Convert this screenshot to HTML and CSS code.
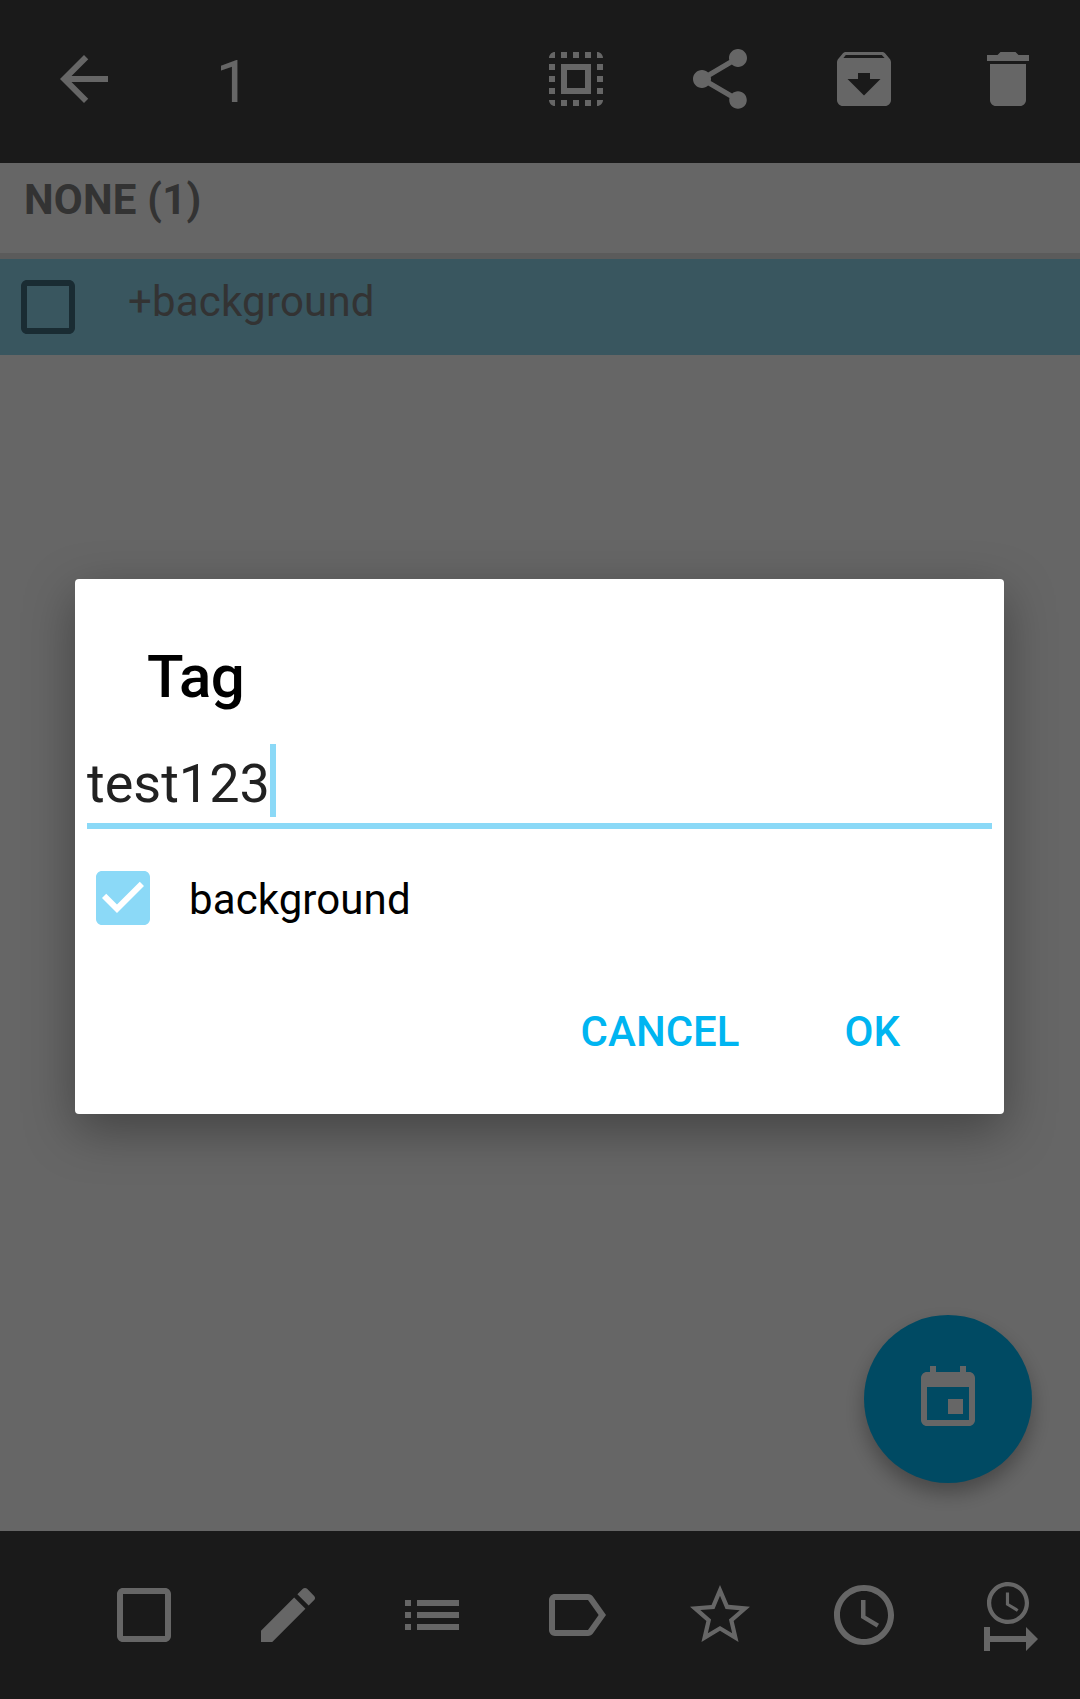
FILE: index.html
```html
<!DOCTYPE html>
<html lang="en">
<head>
  <meta charset="UTF-8">
  <title>Tag dialog</title>
  <link rel="stylesheet" href="styles.css">
</head>
<body>
<div class="app">
  <header class="topbar">
    <svg class="icon back" viewBox="0 0 24 24"><path d="M20 11H7.83l5.59-5.59L12 4l-8 8 8 8 1.41-1.41L7.83 13H20v-2z"/></svg>
    <span class="count">1</span>
    <div class="actions">
      <svg class="icon" viewBox="0 0 24 24"><path d="M3 5h2V3c-1.1 0-2 .9-2 2zm0 8h2v-2H3v2zm4 8h2v-2H7v2zM3 9h2V7H3v2zm10-6h-2v2h2V3zm6 0v2h2c0-1.1-.9-2-2-2zM5 21v-2H3c0 1.1.9 2 2 2zm-2-4h2v-2H3v2zM9 3H7v2h2V3zm2 18h2v-2h-2v2zm8-8h2v-2h-2v2zm0 8c1.1 0 2-.9 2-2h-2v2zm0-12h2V7h-2v2zm0 8h2v-2h-2v2zm-4 4h2v-2h-2v2zm0-16h2V3h-2v2zM7 17h10V7H7v10zm2-8h6v6H9V9z"/></svg>
      <svg class="icon" viewBox="0 0 24 24"><path d="M18 16.08c-.76 0-1.44.3-1.96.77L8.91 12.7c.05-.23.09-.46.09-.7s-.04-.47-.09-.7l7.05-4.11c.54.5 1.25.81 2.04.81 1.66 0 3-1.34 3-3s-1.34-3-3-3-3 1.34-3 3c0 .24.04.47.09.7L8.04 9.81C7.5 9.31 6.79 9 6 9c-1.66 0-3 1.34-3 3s1.34 3 3 3c.79 0 1.5-.31 2.04-.81l7.12 4.16c-.05.21-.08.43-.08.65 0 1.61 1.31 2.92 2.92 2.92s2.92-1.31 2.92-2.92-1.31-2.92-2.92-2.92z"/></svg>
      <svg class="icon" viewBox="0 0 24 24"><path d="M20.54 5.23l-1.39-1.68C18.88 3.21 18.47 3 18 3H6c-.47 0-.88.21-1.16.55L3.46 5.23C3.17 5.57 3 6.02 3 6.5V19c0 1.1.9 2 2 2h14c1.1 0 2-.9 2-2V6.5c0-.48-.17-.93-.46-1.27zM12 17.5L6.5 12H10v-2h4v2h3.5L12 17.5zM5.12 5l.81-1h12l.94 1H5.12z"/></svg>
      <svg class="icon" viewBox="0 0 24 24"><path d="M6 19c0 1.1.9 2 2 2h8c1.1 0 2-.9 2-2V7H6v12zM19 4h-3.5l-1-1h-5l-1 1H5v2h14V4z"/></svg>
    </div>
  </header>

  <main class="list">
    <div class="group-title">NONE (1)</div>
    <div class="task">
      <svg class="icon task-check" viewBox="0 0 24 24"><path d="M19 5v14H5V5h14m0-2H5c-1.1 0-2 .9-2 2v14c0 1.1.9 2 2 2h14c1.1 0 2-.9 2-2V5c0-1.1-.9-2-2-2z"/></svg>
      <span class="task-text">+background</span>
    </div>
    <button class="fab">
      <svg class="icon" viewBox="0 0 24 24"><path d="M17 12h-5v5h5v-5zM16 1v2H8V1H6v2H5c-1.11 0-1.99.9-1.99 2L3 19c0 1.1.89 2 2 2h14c1.1 0 2-.9 2-2V5c0-1.1-.9-2-2-2h-1V1h-2zm3 18H5V8h14v11z"/></svg>
    </button>
  </main>

  <footer class="bottombar">
    <svg class="icon" viewBox="0 0 24 24"><path d="M19 5v14H5V5h14m0-2H5c-1.1 0-2 .9-2 2v14c0 1.1.9 2 2 2h14c1.1 0 2-.9 2-2V5c0-1.1-.9-2-2-2z"/></svg>
    <svg class="icon" viewBox="0 0 24 24"><path d="M3 17.25V21h3.75L17.81 9.94l-3.75-3.75L3 17.25zM20.71 7.04c.39-.39.39-1.02 0-1.41l-2.34-2.34c-.39-.39-1.02-.39-1.41 0l-1.83 1.83 3.75 3.75 1.83-1.83z"/></svg>
    <svg class="icon" viewBox="0 0 24 24"><path d="M3 13h2v-2H3v2zm0 4h2v-2H3v2zm0-8h2V7H3v2zm4 4h14v-2H7v2zm0 4h14v-2H7v2zM7 7v2h14V7H7z"/></svg>
    <svg class="icon" viewBox="0 0 24 24"><path d="M17.63 5.84C17.27 5.33 16.67 5 16 5L5 5.01C3.9 5.01 3 5.9 3 7v10c0 1.1.9 1.99 2 1.99L16 19c.67 0 1.27-.33 1.63-.84L22 12l-4.37-6.16zM16 17H5V7h11l3.55 5L16 17z"/></svg>
    <svg class="icon" viewBox="0 0 24 24"><path fill-rule="evenodd" d="M22 9.24l-7.19-.62L12 2 9.19 8.63 2 9.24l5.46 4.73L5.82 21 12 17.27 18.18 21l-1.63-7.03L22 9.24zM12 15.65L7.94 18.1l1.08-4.62-3.59-3.11 4.73-.41L12 5.62l1.85 4.35 4.73.41-3.59 3.1 1.08 4.62L12 15.65z"/></svg>
    <svg class="icon" viewBox="0 0 24 24"><path d="M11.99 2C6.47 2 2 6.48 2 12s4.47 10 9.99 10C17.52 22 22 17.52 22 12S17.52 2 11.99 2zM12 20c-4.42 0-8-3.58-8-8s3.58-8 8-8 8 3.58 8 8-3.58 8-8 8zm.5-13H11v6l5.25 3.15.75-1.23-4.5-2.67z"/></svg>
    <svg class="icon" viewBox="0 0 24 24">
      <path transform="translate(12 8) scale(.7) translate(-12 -12)" d="M11.99 2C6.47 2 2 6.48 2 12s4.47 10 9.99 10C17.52 22 22 17.52 22 12S17.52 2 11.99 2zM12 20c-4.42 0-8-3.58-8-8s3.58-8 8-8 8 3.58 8 8-3.58 8-8 8zm.5-13H11v6l5.25 3.15.75-1.23-4.5-2.67z"/>
      <path d="M4 16h2v3h12v-3l4 4-4 4v-3H6v3H4z"/>
    </svg>
  </footer>
</div>

<div class="overlay">
  <div class="dialog">
    <h2 class="dialog-title">Tag</h2>
    <div class="field">
      <span class="field-text">test123</span>
      <span class="cursor"></span>
    </div>
    <div class="tag-row">
      <svg class="tag-check" viewBox="3 3 18 18"><path d="M19 3H5c-1.11 0-2 .9-2 2v14c0 1.1.89 2 2 2h14c1.11 0 2-.9 2-2V5c0-1.11-.89-2-2-2zm-9 14l-5-5 1.41-1.41L10 14.17l7.59-7.59L19 8l-9 9z"/></svg>
      <span class="tag-name">background</span>
    </div>
    <div class="dialog-actions">
      <span>CANCEL</span>
      <span>OK</span>
    </div>
  </div>
</div>
</body>
</html>
```

FILE: styles.css
```css
html, body {
  margin: 0;
  padding: 0;
  height: 100%;
}
body {
  position: relative;
  overflow: hidden;
  background-color: #fff;
  font-family: Roboto, "Liberation Sans", sans-serif;
}
.app {
  display: flex;
  flex-direction: column;
  height: 1699px;
}
.icon {
  display: block;
  flex: none;
  width: 72px;
  height: 72px;
  fill: #fff;
}

.topbar {
  display: flex;
  flex: none;
  align-items: flex-start;
  box-sizing: border-box;
  height: 163px;
  padding: 43px 36px 0 48px;
  background-color: #424242;
  color: #fff;
}
.count {
  margin-left: 96px;
  font-size: 60px;
  line-height: 77px;
}
.actions {
  display: flex;
  gap: 72px;
  margin-left: auto;
}

.list {
  position: relative;
  flex: 1;
}
.group-title {
  box-sizing: border-box;
  height: 96px;
  padding-left: 24px;
  border-bottom: 6px solid #e4e4e4;
  color: #808080;
  font-size: 42px;
  font-weight: 700;
  line-height: 73px;
  letter-spacing: 0.2px;
}
.task {
  display: flex;
  align-items: flex-start;
  height: 96px;
  padding-left: 12px;
  background-color: #8ed6ee;
  color: #808080;
  font-size: 42px;
  line-height: 86px;
}
.task-check {
  margin-top: 12px;
  fill: #416e80;
}
.task-text {
  margin-left: 44px;
  letter-spacing: 0.2px;
}
.fab {
  position: absolute;
  right: 48px;
  bottom: 48px;
  display: flex;
  align-items: center;
  justify-content: center;
  width: 168px;
  height: 168px;
  padding: 0;
  border: none;
  border-radius: 50%;
  background-color: #00b9f8;
  box-shadow: 0 10px 20px rgba(0,0,0,0.3);
}

.bottombar {
  display: flex;
  flex: none;
  gap: 72px;
  box-sizing: border-box;
  height: 168px;
  padding: 48px 0 0 108px;
  background-color: #424242;
}

.overlay {
  position: absolute;
  top: 0;
  left: 0;
  right: 0;
  bottom: 0;
  display: flex;
  align-items: flex-start;
  padding: 579px 0 0 75px;
  background-color: rgba(0,0,0,0.6);
}
.dialog {
  box-sizing: border-box;
  width: 929px;
  height: 535px;
  padding: 58px 12px 0;
  border-radius: 4px;
  background-color: #fff;
  box-shadow: 0 16px 50px rgba(0,0,0,0.35);
}
.dialog-title {
  margin: 0 0 27px 60px;
  color: #000;
  font-size: 60px;
  font-weight: 500;
  line-height: 80px;
  letter-spacing: -0.6px;
}
.field {
  display: flex;
  border-bottom: 6px solid #8bd9f7;
  color: #212121;
  font-size: 54px;
  line-height: 79px;
}
.cursor {
  width: 6px;
  height: 73px;
  background-color: #8bd9f7;
}
.tag-row {
  display: flex;
  align-items: center;
  gap: 39px;
  margin-top: 42px;
  padding-left: 9px;
  color: #000;
  font-size: 42px;
  line-height: 54px;
}
.tag-check {
  display: block;
  width: 54px;
  height: 54px;
  fill: #8bd9f7;
}
.tag-name {
  position: relative;
  top: 2px;
  letter-spacing: 0.1px;
}
.dialog-actions {
  display: flex;
  justify-content: flex-end;
  gap: 105px;
  margin-top: 77px;
  padding-right: 92px;
  color: #00b5f1;
  font-size: 42px;
  font-weight: 500;
  line-height: 60px;
}
```
